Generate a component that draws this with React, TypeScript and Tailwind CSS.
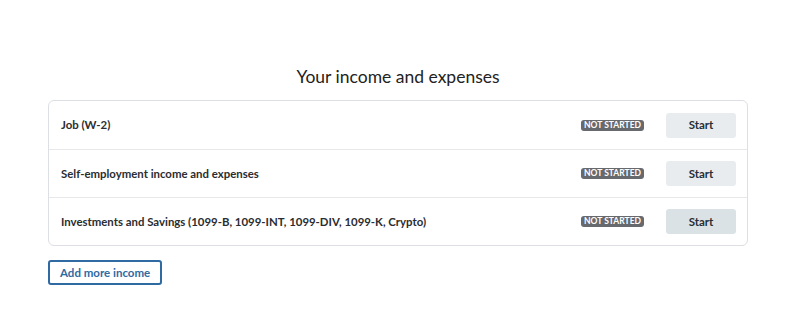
const rows = [
  { label: 'Job (W-2)', hover: false },
  { label: 'Self-employment income and expenses', hover: false },
  { label: 'Investments and Savings (1099-B, 1099-INT, 1099-DIV, 1099-K, Crypto)', hover: true },
]

export default function App() {
  return (
    <div className="w-full h-[323px] bg-white text-[#1f2226]" style={{ fontFamily: 'Lato, "Open Sans", sans-serif' }}>
      <div className="w-[700px] ml-[48px] pt-[64px]">
        <h1 className="text-center text-[17.5px] leading-[26px] mb-[10px] text-[#222]">Your income and expenses</h1>
        <div className="border border-[#dcdfe3] rounded-[6px]">
          {rows.map((r, i) => (
            <div
              key={r.label}
              className={`flex items-center h-[48px] pl-[12px] pr-[11px] ${i > 0 ? 'border-t border-[#e6e8eb]' : ''}`}
            >
              <span className="flex-1 text-[11.4px] font-bold text-[#2a2d31]">{r.label}</span>
              <span className="bg-[#66696d] text-white text-[8.5px] font-bold leading-[11px] px-[3px] rounded-[3px]">
                NOT STARTED
              </span>
              <button
                className={`ml-[22px] w-[70px] h-[25px] rounded-[3px] text-[11.5px] font-bold text-[#2a2d31] ${
                  r.hover ? 'bg-[#dbe2e5]' : 'bg-[#e8ecef]'
                }`}
              >
                Start
              </button>
            </div>
          ))}
        </div>
        <button className="mt-[14px] h-[25px] px-[10px] border-2 border-[#2f6aa3] rounded-[3px] text-[11.5px] font-bold text-[#2f6aa3]">
          Add more income
        </button>
      </div>
    </div>
  )
}
